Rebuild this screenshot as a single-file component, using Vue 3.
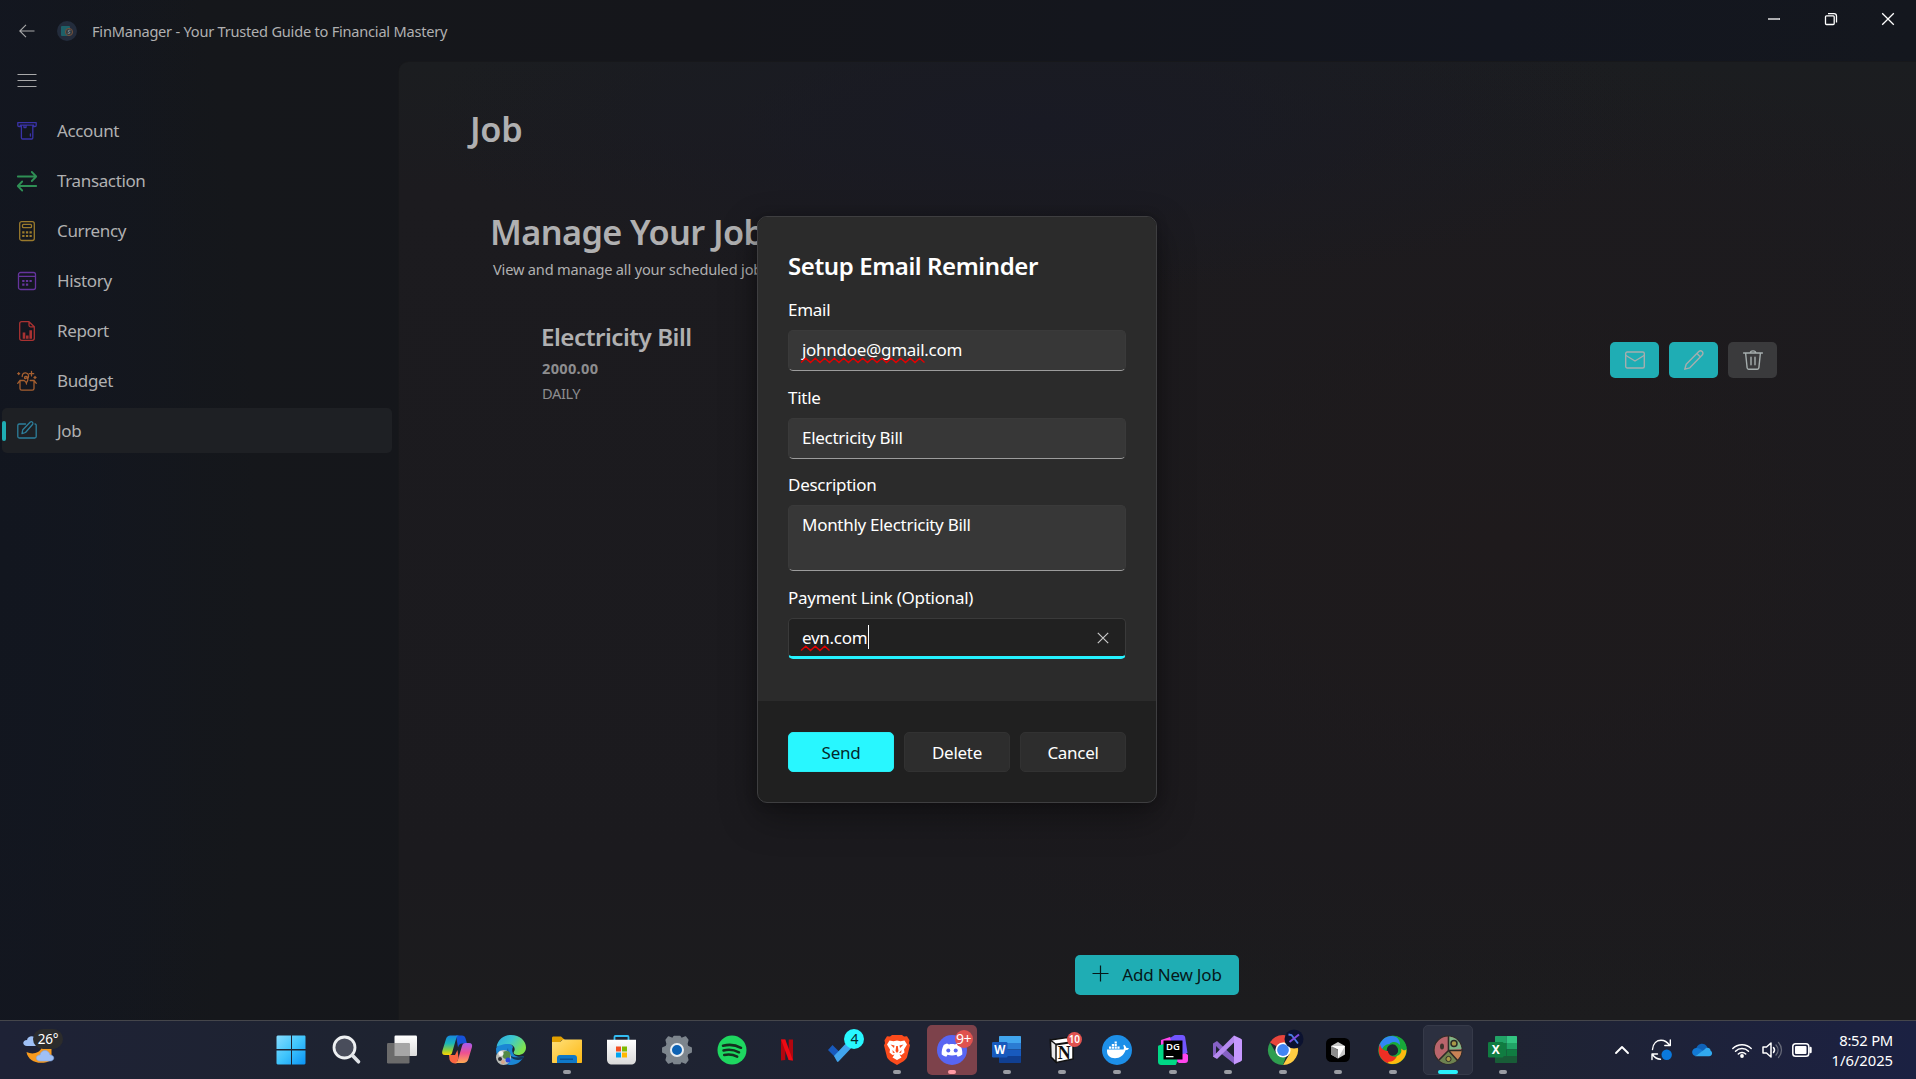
<script setup>
const nav = [
  { name: 'Account', color: '#3a33a8', icon: '<path d="M3.600 5.500H2C1.200 5.500.8 5 .8 4.300V1.700h18.400v2.600c0 .8-.4 1.200-1.200 1.200h-1.600M3.400 4.200h13.200M4.400 4.200v12.600c0 .8.4 1.200 1.200 1.200h9c.8 0 1.200-.4 1.200-1.200V4.200M7 4.400v2.200h2V4.400M13.400 13v2"/>' },
  { name: 'Transaction', color: '#2f8f55', sw: 1.8, icon: '<path d="M.8 5.500h18.200M14.800 1l4.400 4.500-4.400 4.500M19.200 15H1M5.200 10.500L.8 15l4.400 4.500"/>' },
  { name: 'Currency', color: '#9a7a2c', icon: '<rect x="2.700" y=".7" width="14.600" height="18.800" rx="2"/><rect x="5.500" y="3.300" width="9" height="3.400" rx="1"/><path stroke-linecap="butt" stroke-width="2.200" d="M5.200 11.300h2.300M8.900 11.300h2.300M12.500 11.300h2.300M5.200 15h2.300M8.900 15h2.300M12.500 15h2.300"/>' },
  { name: 'History', color: '#65349c', icon: '<rect x="1.500" y="1.500" width="17" height="17" rx="2"/><path d="M2 5.300h16"/><path stroke-linecap="butt" stroke-width="2.200" d="M5.200 10h2.300M8.900 10h2.300M12.500 10h2.300M5.200 13.700h2.300M8.900 13.700h2.300"/>' },
  { name: 'Report', color: '#a93232', icon: '<path d="M12 .7H4.700c-1.200 0-2 .8-2 2v14.600c0 1.200.8 2 2 2h10.600c1.200 0 2-.8 2-2V5.800L12 .7v3.600c0 1 .5 1.500 1.500 1.500H17"/><path stroke-linecap="butt" stroke-width="2.600" d="M7 11.500v6.300M10.300 14.500v3.300M13.700 9.300v8.500"/>' },
  { name: 'Budget', color: '#a55f30', icon: '<path d="M3 10.500v7c0 1 .6 1.700 1.700 1.700h10.600c1 0 1.700-.7 1.700-1.700v-7M3 9.500L.7 12.300M17 9.500l2.300 2.800M3 9.500h3.600M17 9.500h-3.800M9.500 13c0-2-1.500-2.500-2.200-3.500M9.500 11.500c2-2.500 1.500-4 1-5C9.800 5 7.500 5.300 7.500 6.700c0 1 1.300 1.300 1.800.5M5.200 5.500C5.200 2.500 7 1.700 8.700 1.900c2.700.3 3.300 2.500 2.600 5"/><path d="M1.700 1.600v2M.7 2.600h2M14.500.5v4.400M12.300 2.700h4.400M18 5.500v2M17 6.500h2"/>' },
  { name: 'Job', color: '#2d7f9c', active: true, icon: '<path d="M8.500 3H2.300C1.300 3 .8 3.500.8 4.500v11c0 1 .6 1.500 1.500 1.500h15.400c1 0 1.500-.5 1.500-1.500v-11c0-.8-.4-1.500-1.200-1.500M5 12.700l.8-4L13.300 1c1.500-1 3.300.6 2.400 2.200L8.500 11.500z"/>' },
]

const fields = [
  { label: 'Email', value: 'johndoe@gmail.com', wave: 124 },
  { label: 'Title', value: 'Electricity Bill' },
  { label: 'Description', value: 'Monthly Electricity Bill', tall: true },
  { label: 'Payment Link (Optional)', value: 'evn.com', wave: 28, focused: true },
]

const wavePath = (w) => {
  let d = 'M0 5.500'
  for (let x = 4.75, up = true; x <= w + 1; x += 4.75, up = !up) d += `L${x} ${up ? 1.2 : 5.5}`
  return d
}

const apps = [
  { id: 'start', icon: '<defs><linearGradient id="wn" x1="0" y1="0" x2="1" y2="1"><stop stop-color="#86dcff"/><stop offset=".5" stop-color="#3fc4fb"/><stop offset="1" stop-color="#0a93f5"/></linearGradient></defs><path fill="url(#wn)" d="M1.500.5H15V14H.5V1.500zM16 .5h13l.5 1V14H16zM.5 15.500H15V29.500H1.500l-1-1zM16 15.500h13.500v13l-1 1H16z"/>' },
  { id: 'search', icon: '<circle cx="12.500" cy="12.500" r="10.500" fill="#494d5b" stroke="#eef0f2" stroke-width="2.800"/><path d="M20.500 20.500l6 6.300" stroke="#dfe2e6" stroke-width="3.600" stroke-linecap="round"/>' },
  { id: 'tasks', icon: '<defs><linearGradient id="tk" x1="0" y1="0" x2="0" y2="1"><stop stop-color="#fff"/><stop offset="1" stop-color="#dcdcdc"/></linearGradient></defs><rect x="7.500" y=".5" width="22.500" height="20.500" rx="1.200" fill="url(#tk)"/><rect x="0" y="8" width="22.500" height="20.500" rx="1.200" fill="#6b6b6b"/><path d="M7.500 8h15v13h-15z" fill="#a6a6a6"/>' },
  { id: 'copilot', icon: '<defs><linearGradient id="ca" x1="0" y1="0" x2="0" y2="1"><stop stop-color="#1787e0"/><stop offset=".4" stop-color="#19b5b9"/><stop offset=".75" stop-color="#8fce3c"/><stop offset="1" stop-color="#ffd500"/></linearGradient><linearGradient id="cb" x1="0" y1="0" x2="0" y2="1"><stop stop-color="#a65af0"/><stop offset=".5" stop-color="#ee5190"/><stop offset="1" stop-color="#ffab52"/></linearGradient></defs><path d="M14 .5h6c2 0 3 1 3.600 3l1.400 5h-5c-2 0-3 1-4 4z" fill="#1652d8"/><path d="M7 20h6l2.500-5 1 8-2 5.500c-4-.2-6-1-7-4z" fill="#fb6642"/><path fill="url(#ca)" d="M8.500.5h9c-2 0-2.800 1.300-3.300 3L10 18c-.5 1.500-1.500 2-3 2H3C.5 20-.3 18.500.3 16L4 4C4.700 1.700 6 .5 8.500.5z"/><path fill="url(#cb)" d="M21 28H12.500c2 0 3-1.500 3.500-3.500l4-13.500c.6-2 1.500-3 3.500-3H27c2.500 0 3.500 1.500 3 4l-3.600 12C25.500 26.800 24 28 21 28z"/>' },
  { id: 'edge', icon: '<defs><linearGradient id="eg" x1="0" y1="0" x2="1" y2=".5"><stop stop-color="#2ba8e0"/><stop offset=".5" stop-color="#3cc7cf"/><stop offset="1" stop-color="#7fe34e"/></linearGradient></defs><path fill="#1b86d4" d="M.2 13C4 6 14 6 17 12c-3 6 3 12 11 9-2 5-7 9-13 9C6 30-1 22 .2 13z"/><path d="M.5 12C2 4 8 0 15 0c9 0 15 6 15 12.500 0 5-4 7.500-8 7.500-4 0-5-1.700-4-3.500 2-3-.5-7.500-6-7.500C6 9 2 11 .5 12z" fill="url(#eg)"/><path d="M12 13c-2 6 4 12 16 8l-1 3c-8 3-15-1-15-11z" fill="#14365a"/><circle cx="7.500" cy="22.500" r="7.500" fill="#b9bdb8"/><circle cx="10.500" cy="20" r="4" fill="#548a45"/><circle cx="5" cy="18.500" r="2.500" fill="#f1f1f1"/><circle cx="4" cy="24" r="2" fill="#322f33"/><circle cx="12" cy="25" r="2.500" fill="#2948e0"/><circle cx="7" cy="27" r="2" fill="#d8a68b"/>' },
  { id: 'files', run: true, icon: '<defs><linearGradient id="fl" x1="0" y1="0" x2="1" y2="1"><stop stop-color="#ffe07a"/><stop offset="1" stop-color="#fdb813"/></linearGradient></defs><path d="M0 3c0-1 .5-1.500 1.500-1.500H9L13 5h-3l-2 2H0z" fill="#e2a000"/><path d="M0 7h8l3-2.500h18c.7 0 1 .3 1 1V27c0 .7-.3 1-1 1H1c-.7 0-1-.3-1-1z" fill="url(#fl)"/><path d="M5 28v-5c0-2 1-3 3-3h14c2 0 3 1 3 3v5z" fill="#0f78c8"/><path d="M8 24.200h13" stroke="#0a4f8f" stroke-width="1.300"/>' },
  { id: 'store', icon: '<defs><linearGradient id="st" x1="0" y1="0" x2="0" y2="1"><stop stop-color="#fff"/><stop offset="1" stop-color="#d9d9d9"/></linearGradient></defs><path d="M7.500 6V2c0-.6.300-1 1-1h12c.7 0 1 .4 1 1v4" fill="none" stroke="#33bcf2" stroke-width="1.800"/><path d="M0 4.700h29v19.800c0 3-2 5-5 5H5c-3 0-5-2-5-5z" fill="url(#st)"/><path fill="#f25022" d="M9 11.500h5v5H9z"/><path fill="#7fba00" d="M15 11.500h5v5h-5z"/><path fill="#00a4ef" d="M9 17.500h5v5H9z"/><path fill="#ffb900" d="M15 17.500h5v5h-5z"/>' },
  { id: 'settings', icon: '<path fill="#7d858d" stroke="#7d858d" stroke-width="1.500" stroke-linejoin="round" d="M6.500 2l4.300 1.800L12 1.500h6l1.200 2.300L23.500 2l2.300 3-1 4 .9 2.500 3.500 1.500v4l-3.500 1.500-.9 2.500 1 4-2.300 3-4.300-1.800L18 28.500h-6l-1.200-2.300L6.500 28l-2.300-3 1-4-.9-2.500L.8 17v-4l3.500-1.500L5.200 9l-1-4z"/><circle cx="15" cy="15" r="6" fill="#0d62b4" stroke="#e9eef2" stroke-width="2"/>' },
  { id: 'spotify', icon: '<circle cx="15" cy="15" r="14.500" fill="#1ed760"/><path d="M6 10.800c6-1.600 12.500-1 18 2M6.500 15.500c5.500-1.500 10.500-.8 15.500 1.800M7.200 20c4.700-1.100 9-.5 13 1.700" fill="none" stroke="#14301f" stroke-width="2.500" stroke-linecap="round"/>' },
  { id: 'netflix', icon: '<path fill="#b1060f" d="M9 4.500h4.300v20.500L9 25.500zM16.700 4.500H21v21l-4.300-.5z"/><path fill="#ee0a14" d="M9 4.500h4.300L21 25.500l-4.400-.5z"/>' },
  { id: 'todo', icon: '<path fill="#185abd" d="M1 15l4.500-5 8 8-4.500 5z" /><path fill="#41a5ee" d="M7 21.500L24.500 3l5 5-18 19c-.5.500-1 .5-1.500 0z" transform="translate(0 -.5)"/>', badge: '4', tone: 'cyan' },
  { id: 'brave', run: true, icon: '<path fill="#fb4b1c" d="M8 1.500L10 0h10l2 1.500 3-.3 2.500 4-.5 3 1 2-3 12c-.5 1.500-2 2.800-3.500 4L15 30l-6.500-3.800C7 25 5.500 23.700 5 22.200L2 10.200l1-2-.5-3 2.500-4z"/><path fill="#fff" d="M7.500 5.500l4 .7L15 5.500l3.500.7 4-.7 2.500 4-3 5 .5 3-3 2.500-2-.5 2 3L15 25l-4.500-2.500 2-3-2 .5-3-2.500.5-3-3-5z"/><path fill="#fb4b1c" d="M8.500 9.500l4 1L12 13zM21.500 9.500l-4 1 .5 2.500zM14.200 11h1.600l.7 5-1.500 2-1.500-2zM10.500 15l2.500 3-2.200-.3zM19.500 15L17 18l2.200-.3z"/>' },
  { id: 'discord', run: true, hot: true, icon: '<circle cx="15" cy="15" r="15" fill="#5865f2"/><path fill="#fff" d="M10 8.500l2 .9c2-.4 4-.4 6 0l2-.9c2 .5 3.300 1.500 3.300 1.500 1.500 3 2.200 6 2 9.500-1.500 1.200-3 1.900-4.600 2.200l-1.200-2c-3 1-6 1-9 0l-1.200 2c-1.600-.3-3.100-1-4.600-2.200-.2-3.500.5-6.500 2-9.500 0 0 1.300-1 3.300-1.500z"/><circle cx="11.300" cy="15.500" r="2" fill="#5865f2"/><circle cx="18.700" cy="15.500" r="2" fill="#5865f2"/>', badge: '9+', tone: 'red' },
  { id: 'word', run: true, icon: '<path fill="#41a5ee" d="M8 1h20c.6 0 1 .4 1 1v6H7V2c0-.6.400-1 1-1z"/><path fill="#2b7cd3" d="M7 8h22v6.500H7z"/><path fill="#185abd" d="M7 14.500h22V21H7z"/><path fill="#103f91" d="M7 21h22v6c0 .6-.4 1-1 1H8c-.6 0-1-.4-1-1z"/><rect y="7" width="15.500" height="15.500" rx="1.200" fill="#185abd"/><text x="7.700" y="19" text-anchor="middle" font-size="11.500" font-weight="700" fill="#fff">W</text>' },
  { id: 'notion', run: true, icon: '<path d="M3.500 5L20 2.500l6 4V24L9.500 27.500 4 22z" fill="#fff" stroke="#111" stroke-width="1.500"/><path d="M3.500 5l5.500 4.500V27L4 22z" fill="#e8e8e8" stroke="#111" stroke-width="1.500"/><path d="M9 9.500L26 7" stroke="#111" stroke-width="1.800"/><text x="17.300" y="23.500" text-anchor="middle" font-size="18" font-weight="700" font-family="Liberation Serif, serif" fill="#111">N</text>', badge: '10', tone: 'red small' },
  { id: 'docker', run: true, icon: '<circle cx="15" cy="15" r="15" fill="#1d8fe8"/><path fill="#fff" d="M5 14.500h16.500c.8-1 .5-2.700-.3-3.700l.9-1c1.300.8 2 2 2 3 1-.1 2 .1 2.900.5-.5 1.200-1.800 1.900-3.500 1.900C22 20 18 23.200 13 23.200c-5 0-8.500-2.700-8-8.700z"/><path fill="#fff" d="M7 11.500h2.200v2.200H7zM9.800 11.500H12v2.200H9.800zM12.600 11.500h2.200v2.200h-2.200zM15.400 11.500h2.200v2.200h-2.200zM9.800 9H12v2H9.800zM12.600 9h2.200v2h-2.200zM12.600 6.500h2.200v2h-2.200z"/>' },
  { id: 'datagrip', run: true, icon: '<path fill="#ff45ed" d="M3 5l9-3 8 10 10 8v5c0 2-1 3-3 3h-6L3 14z"/><path fill="#7256ff" d="M12 3l4-2.500c.6-.3 1-.5 2-.5h6.500C26 0 27 1 27.200 2.500L29.500 18 20 20z"/><path fill="#00d886" d="M0 12c0-1 .4-1.500 1.300-1.700L6 9v14h12l1.500 2-1.200 4c-.3.700-.6 1-1.300 1H4c-3 0-4-1-4-4z"/><path fill="#000" d="M5.500 5.500h19v19h-19z"/><text x="15" y="15" text-anchor="middle" font-size="9.500" font-weight="600" fill="#fff">DG</text><path fill="#fff" d="M8 21h7.500v1.300H8z"/>' },
  { id: 'vs', run: true, icon: '<path fill="#8661c5" d="M0 8.500L4 6l18 17v6.500L7.500 18 3 23 0 21.500zM3 11v8l4-4z" fill-rule="evenodd"/><path fill="#b58af0" d="M4 24L0 21.500 21 .5v7z"/><path fill="#c698ff" d="M21 .5L27.500 3.500c1 .5 1.500 1 1.500 2v19c0 1-.5 1.500-1.500 2L21 29.500z"/>' },
  { id: 'chrome', run: true, icon: '<path fill="#e8453c" d="M15 15L2 7.500A15 15 0 0 1 28 7.500z"/><path fill="#ffcd42" d="M15 15V7.500h13A15 15 0 0 1 15 30l6.500-11z"/><path fill="#2f9e4f" d="M15 30A15 15 0 0 1 2 7.500L8.500 19 15 22l3-.5z"/><circle cx="15" cy="15" r="7.600" fill="#fff"/><circle cx="15" cy="15" r="5.900" fill="#4285f4"/><circle cx="26" cy="4" r="9.500" fill="#0b1230"/><path d="M20.500-.5l3 .5L30 8.500" fill="none" stroke="#4b7de8" stroke-width="1.800"/><path d="M31-.5L21.500 7" stroke="#7d4be0" stroke-width="2"/>' },
  { id: 'cursor', run: true, icon: '<rect x="3" y="3" width="24" height="24" rx="5.500" fill="#000"/><path fill="#c9c9c9" d="M15 7l7 4v8.500l-7 4-7-4V11z"/><path fill="#8d8d8d" d="M8 11l7 4v8.500l-7-4z"/><path fill="#fff" d="M8 11h14l-7 12.500V15z"/><path fill="#565656" d="M8 11l7 4.500 0-1z"/>' },
  { id: 'swirl', run: true, icon: '<circle cx="14.500" cy="15" r="10" stroke="#18a83a" stroke-width="8.500"/><path fill="#18a83a" d="M13 1c9-1.500 16.500 6 15.500 14-1 4-3.500 6-6.500 6l-2-6z"/><path fill="#3186f5" d="M1 11C4 2 12-1 18 2c3 2 4 4.500 4 8-3-3.500-7.500-4-10.500-1-4 0-7 3-8 7-2-1-2.800-3-2.500-5z"/><path fill="#ee2f24" d="M2 9c1 5 4 7 8 7 .3 4 4 6.500 8.500 5.500-1 4-4 7-8 7C4 26.500-2 19 2 9z"/><path fill="#fdb90f" d="M28.300 14c1 8-6 16-15 15-2-.3-3-1-3.500-2 5-.3 8-2.500 9-6 3.500-1 5.300-4 4.300-7.500 2.500 2.500 4.500 2 5.200.5z"/><circle cx="15" cy="15" r="5" fill="#1f2333"/>' },
  { id: 'finmanager', run: true, focus: true, icon: '<circle cx="15" cy="15" r="14" fill="#b9656c" stroke="#2d2b26" stroke-width="1.200"/><path fill="#7fb585" d="M16 1.500A13.500 13.500 0 0 1 28.500 14L16 15z"/><path fill="#c98355" d="M28.500 15.500A13.500 13.500 0 0 1 24 25l-8-9z"/><path fill="#6d8350" d="M15 16l9 9.500a13 13 0 0 1-17.500 0z"/><path fill="none" stroke="#2d2b26" stroke-width="1.600" d="M15.500 1v14.500h13.200M15.500 15.500L24.500 25.500M15.500 15.500L6 25"/><circle cx="21" cy="8.500" r="3" fill="#a99a48" stroke="#2d2b26" stroke-width="1.500"/><circle cx="15.500" cy="24" r="2.600" fill="#a99a48" stroke="#2d2b26"/><ellipse cx="9" cy="11.500" rx="2" ry="3" fill="#3f342d"/>' },
  { id: 'excel', run: true, icon: '<path fill="#21a366" d="M8 1h10.500v7H7V2c0-.6.400-1 1-1z"/><path fill="#33c481" d="M18.500 1H28c.6 0 1 .4 1 1v6H18.500z"/><path fill="#107c41" d="M7 8h11.500v13H7z"/><path fill="#21a366" d="M18.500 8H29v6.500H18.500z"/><path fill="#107c41" d="M18.500 14.500H29V21H18.500z"/><path fill="#185c37" d="M7 21h22v6c0 .6-.4 1-1 1H8c-.6 0-1-.4-1-1z"/><rect y="7" width="15.500" height="15.500" rx="1.200" fill="#107c41"/><text x="7.700" y="19" text-anchor="middle" font-size="12" font-weight="700" fill="#fff">X</text>' },
]
</script>

<template>
  <div class="desktop">
    <div class="window">
      <header class="titlebar">
        <svg class="back" width="16" height="14" viewBox="0 0 16 14"><path d="M15.500 7H1M7 .8L.8 7 7 13.200" /></svg>
        <svg class="logo" width="20" height="20" viewBox="0 0 20 20">
          <circle cx="10" cy="10" r="10" fill="#232c3c" />
          <rect x="4" y="5" width="9" height="10" rx="1" fill="#1e6068" />
          <circle cx="12" cy="11" r="3.600" fill="#2f3a42" stroke="#76503a" />
          <path d="M13.300 9.500c-2-1-3 1-1.300 1.500s.8 2-1.300 1.200" fill="none" stroke="#8fa0a5" stroke-width=".8" />
        </svg>
        <span class="app-title">FinManager - Your Trusted Guide to Financial Mastery</span>
        <svg class="controls" width="126" height="12" viewBox="0 0 126 12">
          <path d="M0 6h12" />
          <rect x="57.500" y="2.800" width="8.700" height="8.700" rx="1" />
          <path d="M60 .6h6c1.600 0 2.500.9 2.500 2.500v6.500" />
          <path d="M114.200.2l11.600 11.600M125.800.2l-11.600 11.600" />
        </svg>
      </header>

      <div class="body">
        <aside class="sidebar">
          <svg class="burger" width="20" height="15" viewBox="0 0 20 15"><path d="M.5 1.500h19M.5 7.500h19M.5 13.500h19" /></svg>
          <nav>
            <a v-for="n in nav" :key="n.name" class="nav-item" :class="{ active: n.active }">
              <svg width="20" height="20" viewBox="0 0 20 20" :stroke="n.color" :stroke-width="n.sw || 1.3" v-html="n.icon"></svg>
              <span>{{ n.name }}</span>
            </a>
          </nav>
        </aside>

        <main class="content">
          <h1>Job</h1>
          <section class="jobs">
            <h2>Manage Your Jobs</h2>
            <p class="sub">View and manage all your scheduled jobs</p>
            <article class="job">
              <div class="job-text">
                <h3>Electricity Bill</h3>
                <p class="amount">2000.00</p>
                <p class="freq">DAILY</p>
              </div>
              <div class="job-actions">
                <button class="teal"><svg width="20" height="18" viewBox="0 0 20 18"><rect x=".7" y="1" width="18.600" height="16" rx="1.500" /><path d="M1 4.500l9 5.500 9-5.500" /></svg></button>
                <button class="teal"><svg width="20" height="20" viewBox="0 0 20 20"><path d="M.8 19.200l1.400-5L14.800 1.600c1-1 2.400-1 3.400 0s1 2.400 0 3.400L5.800 17.800zM13 3.600L16.400 7" /></svg></button>
                <button class="grey"><svg width="20" height="20" viewBox="0 0 20 20"><path d="M.6 3h18.800M2.600 3l1.500 14.700c.1.900.6 1.500 1.500 1.500h8.800c.9 0 1.400-.6 1.500-1.500L17.400 3M7.300 3c0-2.800 5.400-2.800 5.400 0M8 7.300v7.500M12 7.300v7.500" /></svg></button>
              </div>
            </article>
          </section>
          <button class="add">
            <svg width="17" height="17" viewBox="0 0 17 17"><path d="M8.500.5v16M.5 8.500h16" /></svg>
            <span>Add New Job</span>
          </button>
        </main>
      </div>

      <div class="overlay">
        <div class="dialog">
          <div class="dialog-main">
            <h4>Setup Email Reminder</h4>
            <div v-for="f in fields" :key="f.label" class="field">
              <label>{{ f.label }}</label>
              <div class="input" :class="{ tall: f.tall, focused: f.focused }">
                <span class="value">{{ f.value }}<svg v-if="f.wave" class="wave" :width="f.wave" height="7"><path :d="wavePath(f.wave)" /></svg></span>
                <i v-if="f.focused" class="caret"></i>
                <svg v-if="f.focused" class="clear" width="12" height="12" viewBox="0 0 12 12"><path d="M.8.8l10.400 10.400M11.200.8L.8 11.200" /></svg>
              </div>
            </div>
          </div>
          <footer>
            <button class="primary">Send</button>
            <button>Delete</button>
            <button>Cancel</button>
          </footer>
        </div>
      </div>
    </div>

    <div class="taskbar">
      <div class="weather">
        <svg width="31" height="28" viewBox="0 0 31 28">
          <path fill="#f79a1e" d="M3.500 17c6 3 13 1 15-4l10 0v12C18 31 5 27 3.500 17z" />
          <path fill="#9fc0f5" d="M4 11C-1 11-1 5 4 5c1-5 8-5 10 0v6z" />
          <path fill="#9fc0f5" stroke="#7fa6e6" stroke-width=".6" d="M17 26c-5 0-5-6 0-6 1-6 9-6 10 0 5 0 5 6 0 6z" />
        </svg>
        <b>26°</b>
      </div>
      <div class="apps">
        <div v-for="a in apps" :key="a.id" class="app" :class="{ run: a.run, hot: a.hot, focus: a.focus }">
          <svg width="30" height="30" viewBox="0 0 30 30" v-html="a.icon"></svg>
          <span v-if="a.badge" class="badge" :class="a.tone">{{ a.badge }}</span>
        </div>
      </div>
      <div class="tray">
        <svg width="14" height="8" viewBox="0 0 14 8" class="line"><path d="M1 7l6-6 6 6" stroke-width="1.900" /></svg>
        <svg width="22" height="22" viewBox="0 0 22 22" class="line">
          <path d="M1.500 10.500C2 4 6 1.200 10 1.200c4 0 6.500 2 8.500 5M19.300 1v5.500h-5.500M1 20.500V15h5.500M1.500 15.500c2 3 4.500 4.700 8 4.700" stroke-width="1.400" />
          <circle cx="15.700" cy="15.700" r="5.200" fill="#0a78dc" stroke="none" />
        </svg>
        <svg width="20" height="14" viewBox="0 0 20 14">
          <path fill="#0f62b8" d="M4 6C5 1 12-2 15.500 4.500L9 10z" />
          <path fill="#1279d4" d="M3.500 13C-1 12-1 6 4 5c2-.5 4 .5 7 3z" />
          <path fill="#31a9ef" d="M3 13.300L12.500 6.500c2-3 6-1.500 6 1C21 9 20.500 13.300 17 13.300z" />
        </svg>
        <svg width="20" height="15" viewBox="0 0 20 15" class="line">
          <path d="M.8 5.500c5-5 13.400-5 18.400 0M3.500 8.300c3.500-3.600 9.500-3.600 13 0M6.300 11c2-2.100 5.400-2.100 7.400 0" stroke-width="1.500" />
          <circle cx="10" cy="13" r="1.900" fill="#fff" stroke="none" />
        </svg>
        <svg width="20" height="18" viewBox="0 0 20 18" class="line">
          <path d="M1 6v6h3.500l4.500 4V2L4.500 6zM11.500 6.500c1.200 1.500 1.200 3.500 0 5" stroke-width="1.500" />
          <path d="M14 4c2.700 3 2.700 7 0 10M16.500 1.500c4 4.500 4 10.500 0 15" stroke="#666a78" stroke-width="1.300" />
        </svg>
        <svg width="20" height="14" viewBox="0 0 20 14" class="line">
          <rect x=".8" y=".8" width="16" height="12.400" rx="2.800" stroke-width="1.500" />
          <rect x="3" y="3" width="11.500" height="8" rx="1" fill="#fff" stroke="none" />
          <path d="M18.500 5v4" stroke-width="2.400" />
        </svg>
      </div>
      <div class="clock"><span>8:52 PM</span><span class="date">1/6/2025</span></div>
    </div>
  </div>
</template>

<style>
body { background: #16171b; overflow: hidden; }
</style>

<style scoped>
.desktop {
  width: 1916px; height: 1079px; display: flex; flex-direction: column; overflow: hidden;
  font: 17px/24px "Noto Sans", "Open Sans", sans-serif; letter-spacing: -.28px; color: #b0b0b1;
}
.desktop * { box-sizing: border-box; }
h1, h2, h3, h4, p { margin: 0; white-space: nowrap; font-weight: 600; }
button { font: inherit; letter-spacing: inherit; color: inherit; border: 0; padding: 0; display: flex; align-items: center; justify-content: center; }
svg { display: block; flex: none; fill: none; overflow: visible; }

.window {
  position: relative; height: 1020px; flex: none; display: flex; flex-direction: column;
  background: radial-gradient(ellipse 260px 900px at 0 560px, #12161f, rgba(18, 22, 31, 0)), linear-gradient(90deg, #141720 0, #15171b 200px, #15161b 700px, #13161f 1500px, #14171e);
}
.titlebar { height: 61px; flex: none; display: flex; align-items: center; padding-left: 19px; }
.back { stroke: #a9a9aa; stroke-width: 1.100; }
.logo { margin-left: 22px; }
.app-title { margin-left: 15px; font-size: 14.6px; letter-spacing: -.23px; }
.controls { margin: 0 22px 23px auto; stroke: #fff; stroke-width: 1.300; }

.body { flex: 1; display: flex; min-height: 0; }
.sidebar { width: 398px; flex: none; padding: 12px 6px 0 2px; }
.burger { margin-left: 15px; stroke: #a9a9aa; stroke-width: 1.200; }
nav { margin-top: 20px; display: flex; flex-direction: column; gap: 5px; }
.nav-item { position: relative; height: 45px; border-radius: 5px; display: flex; align-items: center; gap: 20px; padding-left: 15px; letter-spacing: -.36px; }
.nav-item svg { stroke-linecap: round; stroke-linejoin: round; }
.nav-item.active { background: #1e2024; }
.nav-item.active::before { content: ""; position: absolute; left: 0; top: 13px; width: 4px; height: 20px; border-radius: 2px; background: #1fadb4; }

.content {
  flex: 1; display: flex; flex-direction: column; padding: 43px 139px 25px 68px; border-radius: 10px 0 0 0;
  border-top: 1px solid #17181b; border-left: 1px solid #17181b;
  background:
    radial-gradient(ellipse 620px 170px at 640px 60px, #191a24, rgba(25, 26, 36, 0)),
    radial-gradient(ellipse 700px 500px at 1100px 480px, #1e1a1c, rgba(30, 26, 28, 0)),
    linear-gradient(180deg, #1b1d20, #1c1b1f 130px, #1b1a1e 800px, #1c1c1e);
}
h1, h2 { font-size: 34.3px; line-height: 47px; letter-spacing: -.6px; }
h1 { padding-left: 3px; letter-spacing: -.3px; }
.jobs { padding: 56px 0 0 23px; }
.sub { margin-top: 4px; padding-left: 3px; font-weight: 400; font-size: 14.6px; line-height: 20px; letter-spacing: -.18px; }
.job { display: flex; justify-content: space-between; align-items: center; margin-top: 41px; padding-left: 51px; }
.job h3 { font-size: 24.2px; line-height: 34px; letter-spacing: -.5px; }
.amount, .freq { padding-left: 1px; font-size: 14.6px; line-height: 20px; color: #8d8d8f; }
.amount { margin-top: 4px; font-weight: 700; letter-spacing: .3px; }
.freq { margin-top: 5px; font-weight: 400; letter-spacing: -.4px; }
.job-actions { display: flex; gap: 10px; margin-bottom: 3px; }
.job-actions button { width: 49px; height: 36px; border-radius: 5px; stroke: #a6aeae; stroke-width: 1.400; stroke-linejoin: round; stroke-linecap: round; }
.teal { background: #1fadb4; }
.grey { background: #3a3a3c; }
.add { align-self: center; margin: auto -70px 0 0; width: 164px; height: 40px; border-radius: 5px; background: #1fadb4; color: #061819; gap: 13px; letter-spacing: -.2px; }
.add svg { stroke: #061819; stroke-width: 1.200; margin-bottom: 3px; }

.overlay { position: absolute; inset: 0; display: flex; align-items: center; justify-content: center; padding: 0 2px 1px 0; }
.dialog {
  width: 400px; height: 587px; border: 1px solid #3e3e40; border-radius: 10px; overflow: hidden; color: #fff;
  background: #202020; display: flex; flex-direction: column; box-shadow: 0 14px 36px rgba(0, 0, 0, .36), 0 0 12px rgba(0, 0, 0, .2);
}
.dialog-main { height: 484px; background: #2b2b2b; padding: 31px 30px 0; }
h4 { font-size: 24px; line-height: 35px; letter-spacing: -.4px; margin-bottom: 15px; }
.field { margin-bottom: 14.500px; }
.field label { display: block; height: 24px; margin-bottom: 8px; }
.input {
  position: relative; height: 41px; display: flex; align-items: flex-start; padding: 7px 13px; border-radius: 5px;
  background: #373737; border: 1px solid #3a3a3a; border-bottom-color: #9c9c9c;
}
.input.tall { height: 66px; }
.input.focused { background: #212121; border-bottom: 3px solid #25f2ff; }
.value { position: relative; }
.wave { position: absolute; left: -1px; bottom: -2px; stroke: #e40000; stroke-width: 1.400; }
.caret { width: 1px; height: 24px; margin: -1px 0 0 1px; background: #fff; }
.clear { margin: 6px 3px 0 auto; stroke: #c9c9c9; stroke-width: 1.200; }
footer { flex: 1; display: flex; gap: 10px; padding: 31px 30px 0; }
footer button { width: 106px; height: 40px; border-radius: 5px; background: #2d2d2d; border: 1px solid #323232; padding-top: 1px; }
footer .primary { background: #28f7ff; border-color: #28eef6; color: #04282a; }

.taskbar {
  position: relative; height: 59px; border-top: 1px solid #45464b; display: flex; align-items: center; color: #fff;
  background: linear-gradient(90deg, #1e2236, #1e2330 400px, #1f2333 900px, #1f2332 1500px, #1c2140 1860px, #1b2142);
}
.weather { position: relative; width: 240px; height: 59px; padding: 14px 0 0 23px; margin-right: 23.500px; flex: none; }
.weather b { position: absolute; left: 33px; top: 8px; width: 30px; height: 20px; border-radius: 10px; background: #2c2c2c; font: 400 13.500px/20px "Noto Sans", sans-serif; text-align: center; letter-spacing: -.3px; }
.apps { display: flex; }
.app { position: relative; width: 55.100px; height: 50px; display: flex; align-items: center; justify-content: center; }
.app:nth-child(n+2):nth-child(-n+4) { padding-left: 2px; }
.app::before { content: ""; position: absolute; inset: 0 2.500px; border-radius: 5px; }
.app.hot::before { background: #7d424b; }
.app.focus::before { background: #2c3040; border: 1px solid #363a49; }
.app svg { position: relative; font-family: "Noto Sans", sans-serif; letter-spacing: 0; }
.app.run::after { content: ""; position: absolute; bottom: 1px; width: 8px; height: 4px; border-radius: 2px; background: #9a9ca3; }
.app.hot::after { background: #ff9aa4; }
.app.focus::after { width: 20px; background: #28f0fb; }
.badge { position: absolute; left: 30px; top: 4px; width: 20px; height: 20px; border-radius: 10px; font-size: 14px; line-height: 20px; text-align: center; }
.badge.cyan { background: #28f7ff; color: #04282a; left: 30px; }
.badge.red { background: #e0524f; width: 18px; height: 18px; line-height: 18px; top: 5px; }
.badge.small { width: 15px; height: 15px; font-size: 10px; line-height: 15px; font-weight: 600; left: 32px; top: 7px; }
.tray { display: flex; align-items: center; gap: 10px; margin-left: auto; }
.tray svg:nth-child(1) { margin-right: 12px; }
.tray svg:nth-child(2) { margin-right: 9px; }
.tray svg:nth-child(3) { margin-right: 10px; }
.line { stroke: #fff; stroke-linejoin: round; stroke-linecap: round; }
.clock { display: flex; flex-direction: column; align-items: flex-end; width: 81px; margin-right: 23px; font-size: 14.800px; line-height: 20px; letter-spacing: -.25px; }
.date { letter-spacing: -.05px; }
</style>
